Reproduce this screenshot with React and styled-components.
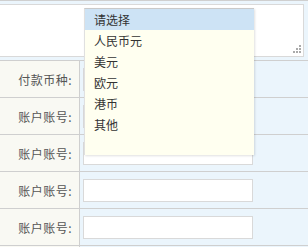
import React from "react";
import styled, { createGlobalStyle } from "styled-components";

const Global = createGlobalStyle`
  html, body { margin: 0; padding: 0; background: #ebf5fc; }
  body { font-family: "Noto Sans CJK SC", "Noto Sans", sans-serif; font-size: 12px; }
`;

const Page = styled.div`
  position: relative;
  width: 308px;
  height: 247px;
  overflow: hidden;
  background: #ebf5fc;
`;

const TopRow = styled.div`
  border-top: 1px solid #cfcfcf;
  padding: 3px 4px 3px 0;
  height: 53px;
`;

const AreaWrap = styled.div`
  position: relative;
  height: 53px;
`;

const TextArea = styled.textarea`
  display: block;
  box-sizing: border-box;
  width: 100%;
  height: 53px;
  margin: 0;
  border: 1px solid #d9d9d9;
  border-left: none;
  background: #fff;
  resize: none;
  outline: none;
`;

const Grip = styled.svg`
  position: absolute;
  right: 3px;
  bottom: 3px;
`;

const Row = styled.div`
  display: grid;
  grid-template-columns: 80px 1fr;
  border-top: 1px solid #cfcfcf;
  height: 36px;
`;

const Label = styled.div`
  background: #f9f9f3;
  border-right: 1px solid #cfcfcf;
  display: flex;
  align-items: center;
  justify-content: flex-end;
  padding-right: 7px;
  color: #555;
  font-size: 12px;
  letter-spacing: 0.5px;
`;

const Cell = styled.div`
  padding: 7px 0 0 3px;
`;

const Input = styled.input`
  display: block;
  box-sizing: border-box;
  width: 170px;
  height: 23px;
  margin: 0;
  border: 1px solid #d9d9d9;
  background: #fff;
  outline: none;
`;

const SelectBox = styled.div`
  box-sizing: border-box;
  width: 170px;
  height: 23px;
  border: 1px solid #d9d9d9;
  background: #fff;
`;

const Dropdown = styled.ul`
  position: absolute;
  left: 84px;
  top: 8px;
  box-sizing: border-box;
  width: 170px;
  height: 147px;
  margin: 0;
  padding: 0;
  list-style: none;
  background: #fffff0;
  border-top: 1px solid #c9c9c9;
  border-left: 1px solid #e0e0e0;
  box-shadow: 1px 1px 2px rgba(0, 0, 0, 0.12);
`;

const Option = styled.li`
  height: 21px;
  line-height: 21px;
  padding-left: 9px;
  color: #333;
  font-size: 12px;
  background: ${(p) => (p.$active ? "#cde3f5" : "transparent")};
`;

const options = ["请选择", "人民币元", "美元", "欧元", "港币", "其他"];

export default function App() {
  return (
    <Page>
      <Global />
      <TopRow>
        <AreaWrap>
          <TextArea />
          <Grip width="9" height="9" viewBox="0 0 9 9">
            {[
              [7, 0],
              [4, 3],
              [7, 3],
              [1, 6],
              [4, 6],
              [7, 6],
            ].map(([x, y], i) => (
              <rect key={i} x={x} y={y} width="2" height="2" fill="#aaa" />
            ))}
          </Grip>
        </AreaWrap>
      </TopRow>
      <Row>
        <Label>付款币种:</Label>
        <Cell>
          <SelectBox />
        </Cell>
      </Row>
      {[0, 1, 2, 3].map((i) => (
        <Row key={i}>
          <Label>账户账号:</Label>
          <Cell>
            <Input />
          </Cell>
        </Row>
      ))}
      <Row>
        <Label />
        <Cell />
      </Row>
      <Dropdown>
        {options.map((o, i) => (
          <Option key={o} $active={i === 0}>
            {o}
          </Option>
        ))}
      </Dropdown>
    </Page>
  );
}
